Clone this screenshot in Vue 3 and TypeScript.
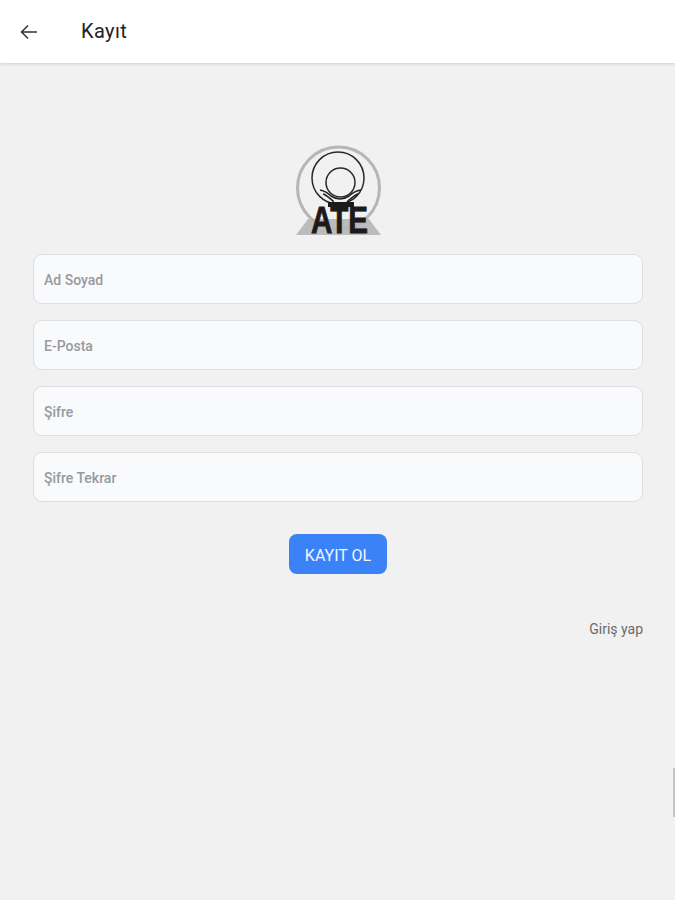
<script setup lang="ts">
import { ref } from 'vue'

const fields = ref(['Ad Soyad', 'E-Posta', 'Şifre', 'Şifre Tekrar'])
</script>

<template>
  <div class="page">
    <header class="toolbar">
      <svg class="back" width="24" height="24" viewBox="0 0 24 24">
        <path d="M20 12H5M11 5.500L4.500 12l6.500 6.500" fill="none" stroke="#333" stroke-width="1.5" />
      </svg>
      <span class="title">Kayıt</span>
    </header>

    <main class="content">
      <svg class="logo" width="115" height="110" viewBox="0 0 115 110">
        <path d="M15 100h85L88 84H27z" fill="#bcbcbc" />
        <circle cx="57.500" cy="53" r="41" fill="none" stroke="#b6b6b6" stroke-width="3" />
        <circle cx="57" cy="43" r="26" fill="#f1f1f1" stroke="#2a2a2a" stroke-width="1.5" />
        <circle cx="59.500" cy="47.500" r="14.500" fill="#f1f1f1" stroke="#2a2a2a" stroke-width="1.5" />
        <path d="M39 55c5 1 8 3 11 6 3 2 6 3 9 3s6-1 9-3c3-3 6-5 12-6" fill="none" stroke="#222" stroke-width="1.6" />
        <path d="M42 59c4 1 7 5 10 7l1 4M77 59c-4 1-7 5-10 7l-1 4" fill="none" stroke="#222" stroke-width="1.6" />
        <rect x="47" y="67" width="26" height="5" fill="#1d1a1a" />
        <text class="ate" x="58.500" y="98" text-anchor="middle" textLength="57" lengthAdjust="spacingAndGlyphs">ATE</text>
      </svg>

      <div class="form">
        <input
          v-for="field in fields"
          :key="field"
          class="input"
          :placeholder="field"
        />
      </div>

      <button class="submit">KAYIT OL</button>

      <a class="login">Giriş yap</a>
    </main>

    <div class="scroll-thumb"></div>
  </div>
</template>

<style scoped>
.page {
  position: relative;
  height: 900px;
  overflow: hidden;
  background: #f1f1f1;
  font-family: Roboto, "Liberation Sans", sans-serif;
}

.toolbar {
  height: 63px;
  display: flex;
  align-items: center;
  background: #fff;
  box-shadow: 0 1px 3px rgba(0, 0, 0, 0.14);
}

.back {
  margin-left: 17px;
}

.title {
  margin-left: 40px;
  margin-top: -2px;
  font-size: 20px;
  font-weight: 400;
  letter-spacing: 0.4px;
  color: #222;
}

.content {
  display: flex;
  flex-direction: column;
  align-items: center;
  padding: 0 32px 0 33px;
}

.logo {
  margin-top: 72px;
  margin-bottom: 9px;
}

.form {
  width: 100%;
  display: flex;
  flex-direction: column;
  gap: 16px;
}

.input {
  box-sizing: border-box;
  width: 100%;
  height: 50px;
  padding: 2px 10px 0;
  background: #f9fafb;
  border: 1px solid #dfdfe1;
  border-radius: 9px;
  font-family: inherit;
  font-size: 14px;
  font-weight: 500;
}

.input::placeholder {
  color: #97999e;
  opacity: 1;
}

.submit {
  width: 98px;
  height: 40px;
  margin-top: 32px;
  padding: 2px 0 0;
  background: #3b82f6;
  border: none;
  border-radius: 8px;
  color: #f2f6ff;
  font-family: inherit;
  font-size: 16px;
  font-weight: 400;
}

.login {
  align-self: flex-end;
  margin-top: 47px;
  font-size: 14px;
  line-height: 16px;
  color: #6b6b6b;
}

.scroll-thumb {
  position: absolute;
  top: 768px;
  right: 0;
  width: 2px;
  height: 49px;
  background: #c4c4c4;
}

.ate {
  font-family: "Liberation Sans", sans-serif;
  font-size: 36px;
  font-weight: 700;
  fill: #1d1a1a;
  stroke: #1d1a1a;
  stroke-width: 0.8;
}
</style>
